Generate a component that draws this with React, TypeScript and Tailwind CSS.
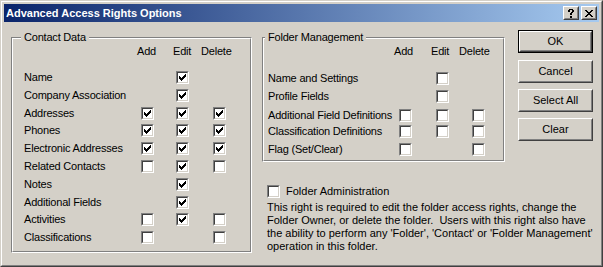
type Cell = boolean | null;

const CONTACT_ROWS: { label: string; cells: Cell[] }[] = [
  { label: "Name", cells: [null, true, null] },
  { label: "Company Association", cells: [null, true, null] },
  { label: "Addresses", cells: [true, true, true] },
  { label: "Phones", cells: [true, true, true] },
  { label: "Electronic Addresses", cells: [true, true, true] },
  { label: "Related Contacts", cells: [false, true, false] },
  { label: "Notes", cells: [null, true, null] },
  { label: "Additional Fields", cells: [null, true, null] },
  { label: "Activities", cells: [false, true, false] },
  { label: "Classifications", cells: [false, null, false] },
];

const FOLDER_ROWS: { label: string; cells: Cell[] }[] = [
  { label: "Name and Settings", cells: [null, false, null] },
  { label: "Profile Fields", cells: [null, false, null] },
  { label: "Additional Field Definitions", cells: [false, false, false] },
  { label: "Classification Definitions", cells: [false, false, false] },
  { label: "Flag (Set/Clear)", cells: [false, null, false] },
];

function Check({ checked }: { checked?: boolean }) {
  return (
    <span className="block h-[13px] w-[13px] border border-t-[#808080] border-l-[#808080] border-r-white border-b-white">
      <span className="flex h-full w-full items-center justify-center border border-t-[#404040] border-l-[#404040] border-r-[#d4d0c8] border-b-[#d4d0c8] bg-white">
        {checked && (
          <svg width="7" height="7" viewBox="0 0 7 7" shapeRendering="crispEdges">
            <path
              d="M6 0h1v1h-1z M5 1h2v1h-2z M0 2h1v1h-1z M4 2h3v1h-3z M0 3h2v1h-2z M3 3h3v1h-3z M0 4h5v1h-5z M1 5h3v1h-3z M2 6h1v1h-1z"
              fill="#000"
            />
          </svg>
        )}
      </span>
    </span>
  );
}

// etched group box, the legend sits over the top line
function GroupBox({
  title,
  legendLeft,
  className,
  children,
}: {
  title: string;
  legendLeft: string;
  className: string;
  children: React.ReactNode;
}) {
  return (
    <div
      className={`relative border border-t-[#808080] border-l-[#808080] border-r-white border-b-white tracking-[-0.2px] ${className}`}
    >
      <div className="h-full w-full border border-t-white border-l-white border-r-[#808080] border-b-[#808080]">
        {children}
      </div>
      <span className={`absolute -top-[7px] bg-[#d4d0c8] px-[3px] leading-[13px] ${legendLeft}`}>{title}</span>
    </div>
  );
}

function Button({ label, isDefault }: { label: string; isDefault?: boolean }) {
  const bevel = (
    <div className="h-full w-full border border-t-white border-l-white border-r-[#404040] border-b-[#404040]">
      <div className="flex h-full w-full items-center justify-center border border-t-[#d4d0c8] border-l-[#d4d0c8] border-r-[#808080] border-b-[#808080] leading-[13px]">
        {label}
      </div>
    </div>
  );
  return (
    <div className={`h-[23px] w-[75px] ${isDefault ? "border border-black" : ""}`}>{bevel}</div>
  );
}

function CaptionButton({ children }: { children: React.ReactNode }) {
  return (
    <div className="h-[14px] w-[16px] border border-t-white border-l-white border-r-[#404040] border-b-[#404040] bg-[#d4d0c8]">
      <div className="flex h-full w-full items-center justify-center border border-t-[#d4d0c8] border-l-[#d4d0c8] border-r-[#808080] border-b-[#808080]">
        {children}
      </div>
    </div>
  );
}

function CheckCell({ value }: { value: Cell }) {
  if (value === null) return <div />;
  return <Check checked={value} />;
}

export default function App() {
  return (
    <div className="h-[267px] w-[603px] bg-[#d4d0c8] font-['Liberation_Sans',Arial,sans-serif] text-[11px] text-black">
      <div className="h-full w-full border border-t-[#d4d0c8] border-l-[#d4d0c8] border-r-[#404040] border-b-[#404040]">
        <div className="flex h-full w-full flex-col border border-t-white border-l-white border-r-[#808080] border-b-[#808080] p-[2px]">
          {/* Title bar */}
          <div className="flex h-[18px] shrink-0 items-center bg-linear-to-r/srgb from-[#0a246a] to-[#a6caf0] pl-[2px] pr-[2px]">
            <span className="text-[11px] font-bold leading-[13px] text-white">Advanced Access Rights Options</span>
            <div className="ml-auto flex gap-[2px]">
              <CaptionButton>
                <svg width="6" height="9" viewBox="0 0 6 9" shapeRendering="crispEdges">
                  <path
                    d="M1 0h4v1h-4z M0 1h2v2h-2z M4 1h2v2h-2z M3 3h2v1h-2z M2 4h2v2h-2z M2 7h2v2h-2z"
                    fill="#000"
                  />
                </svg>
              </CaptionButton>
              <CaptionButton>
                <svg width="8" height="7" viewBox="0 0 8 7" shapeRendering="crispEdges">
                  <path
                    d="M0 0h2v1h-2z M6 0h2v1h-2z M1 1h2v1h-2z M5 1h2v1h-2z M2 2h4v1h-4z M3 3h2v1h-2z M2 4h4v1h-4z M1 5h2v1h-2z M5 5h2v1h-2z M0 6h2v1h-2z M6 6h2v1h-2z"
                    fill="#000"
                  />
                </svg>
              </CaptionButton>
            </div>
          </div>

          {/* Body */}
          <div className="flex flex-1">
            <GroupBox title="Contact Data" legendLeft="left-[9px]" className="ml-[7px] mt-[15px] h-[216px] w-[241px]">
              <div className="pl-[11px] pt-[6px]">
                <div className="flex h-[26px] leading-[13px]">
                  <div className="w-[113px]" />
                  <span className="w-[36px]">Add</span>
                  <span className="w-[28px]">Edit</span>
                  <span>Delete</span>
                </div>
                <div className="grid grid-cols-[117px_35px_37px_1fr] grid-rows-[18px_18px_17px_18px_18px_18px_18px_17px_18px_18px] items-start leading-[13px]">
                  {CONTACT_ROWS.map((row) => (
                    <div key={row.label} className="contents">
                      <span>{row.label}</span>
                      {row.cells.map((c, i) => (
                        <CheckCell key={i} value={c} />
                      ))}
                    </div>
                  ))}
                </div>
              </div>
            </GroupBox>

            <div className="ml-[10px] mt-[8px] flex flex-col">
              <div className="flex items-start">
                <GroupBox
                  title="Folder Management"
                  legendLeft="left-[2px]"
                  className="mt-[7px] h-[125px] w-[243px]"
                >
                  <div className="pl-[4px] pt-[6px]">
                    <div className="flex h-[27px] leading-[13px]">
                      <div className="w-[126px]" />
                      <span className="w-[37px]">Add</span>
                      <span className="w-[28px]">Edit</span>
                      <span>Delete</span>
                    </div>
                    <div className="grid grid-cols-[131px_37px_36px_1fr] grid-rows-[18px_19px_16px_18px_18px] items-start leading-[13px]">
                      {FOLDER_ROWS.map((row) => (
                        <div key={row.label} className="contents">
                          <span className="whitespace-nowrap">{row.label}</span>
                          {row.cells.map((c, i) => (
                            <CheckCell key={i} value={c} />
                          ))}
                        </div>
                      ))}
                    </div>
                  </div>
                </GroupBox>

                <div className="ml-[13px] flex flex-col gap-[6px]">
                  <div className="mb-px">
                    <Button label="OK" isDefault />
                  </div>
                  <Button label="Cancel" />
                  <Button label="Select All" />
                  <Button label="Clear" />
                </div>
              </div>

              <div className="ml-[5px] mt-[23px] flex items-start gap-[6px] leading-[13px]">
                <Check />
                <span>Folder Administration</span>
              </div>
              <p className="ml-[5px] mt-[3px] whitespace-pre leading-[13px]">
                {"This right is required to edit the folder access rights, change the\nFolder Owner, or delete the folder.  Users with this right also have\nthe ability to perform any 'Folder', 'Contact' or 'Folder Management'\noperation in this folder."}
              </p>
            </div>
          </div>
        </div>
      </div>
    </div>
  );
}
